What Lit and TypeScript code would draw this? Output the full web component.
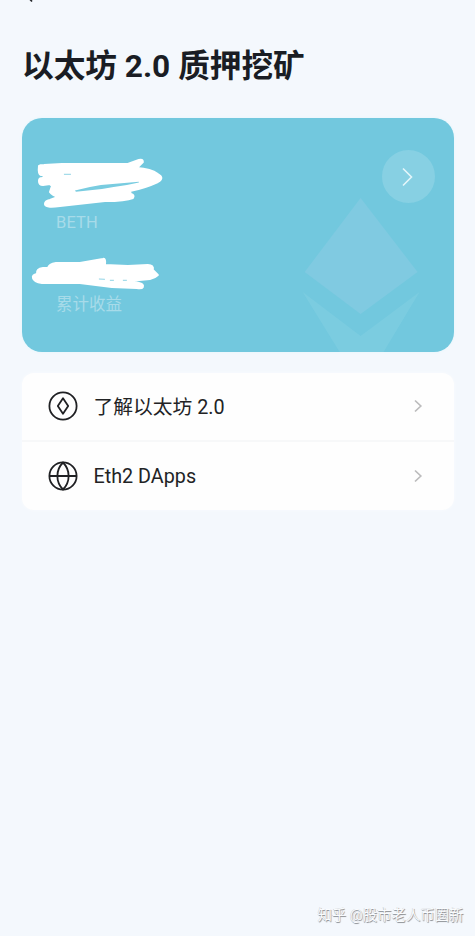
import { LitElement, html, css, svg } from "lit";
import { customElement, property } from "lit/decorators.js";

@customElement("staking-card")
class StakingCard extends LitElement {
  static styles = css`
    :host { display: block; }
    .card { position: relative; height: 234px; border-radius: 20px; overflow: hidden; background: #72c8de; display: flex; justify-content: space-between; box-sizing: border-box; padding: 32px 19px 0 34px; box-shadow: 0 0 3px #e2f6fb; }
    .art { position: absolute; inset: 0; width: 100%; height: 100%; }
    .labels { position: relative; display: flex; flex-direction: column; padding-top: 61px; gap: 58px; font-size: 16.5px; line-height: 24px; color: #a7dbe9; }
    .beth { letter-spacing: 0.1px; }
    .go { position: relative; width: 53px; height: 53px; border-radius: 50%; background: #87d0e3; display: flex; align-items: center; justify-content: center; }
  `;
  render() {
    return html`<div class="card">
      <svg class="art" viewBox="22 118 432 234" preserveAspectRatio="none">
        <path fill="#80cae1" d="M361 198L418 272L361 314L305 272Z"/>
        <path fill="#7bcce0" d="M303 292L361 336L420 292L384 352H340Z"/>
        <g fill="#fff" stroke="#fff" stroke-width="2" stroke-linejoin="round" stroke-linecap="round">
          <path d="M39 166Q40 165 44 165L62 164L128 164L139 160Q143 159 143 162L137 168Q151 169 158 174Q165 178 158 182Q145 188 130 191L131 194Q135 195 133 198Q126 201 105 201L60 206Q45 208 45 204Q45 201 50 200L58 197Q52 195 50 192L52 186L50 184L43 185Q39 185 39 181Q39 178 42 178L48 174L41 175Q38 174 39 166Z"/>
          <path d="M33 278Q32 275 37 274Q36 269 43 268L48 268Q49 264 56 263L80 263L103 259Q106 258 105 265L128 266L148 265Q154 265 153 270L158 275Q155 278 150 279L129 281L139 283Q144 284 143 287Q142 289 137 288L112 287L80 283L42 283Q34 282 33 278Z"/>
        </g>
        <path fill="#79cce0" d="M75 190.5Q88 187 101 185L139 181.7V182.6L127 185Q113 187 102 189L76 191.8Z"/>
        <path fill="none" stroke="#72c8de" stroke-width=".8" d="M64 174.3h7M99 279l6 .3m5 1h4m9 0h4"/>
      </svg>
      <div class="labels"><span class="beth">BETH</span><span>累计收益</span></div>
      <div class="go"><svg width="14" height="20" viewBox="0 0 14 20" fill="none" stroke="#e4f6fa" stroke-width="1.6"><path d="M2 1.5L10.5 10L2 18.5"/></svg></div>
    </div>`;
  }
}

@customElement("menu-row")
class MenuRow extends LitElement {
  @property() icon = "";
  @property() label = "";
  static styles = css`
    :host { display: block; }
    .row { height: 100%; display: flex; align-items: center; box-sizing: border-box; padding: 0 31px 1px 26px; }
    .icon { width: 30px; height: 30px; flex: none; }
    .label { flex: 1; margin-left: 15.5px; padding-top: 3px; font-size: 19.75px; line-height: 28px; color: #222325; white-space: nowrap; }
    .arrow { width: 10px; height: 14px; flex: none; }
  `;
  render() {
    const glyph = this.icon === "globe"
      ? svg`<path d="M15 1.5C7.5 9 7.5 21 15 28.5C22.5 21 22.5 9 15 1.5ZM1.5 15H28.5"/>`
      : svg`<path d="M15 7.2L20.2 15L15 22.8L9.8 15Z"/>`;
    return html`<div class="row">
      <svg class="icon" viewBox="0 0 30 30" fill="none" stroke="#202124" stroke-width="1.8" stroke-linejoin="round"><circle cx="15" cy="15" r="13.6"/>${glyph}</svg>
      <span class="label">${this.label}</span>
      <svg class="arrow" viewBox="0 0 10 14" fill="none" stroke="#bcbcbd" stroke-width="1.7"><path d="M2 1.5L7.8 7L2 12.5"/></svg>
    </div>`;
  }
}

@customElement("app-root")
class AppRoot extends LitElement {
  static styles = css`
    :host { display: block; font-family: Roboto, "Noto Sans CJK SC", sans-serif; }
    .page { position: relative; height: 936px; box-sizing: border-box; padding: 0 21.5px 0 22px; background: #f4f8fd; overflow: hidden; display: flex; flex-direction: column; }
    .back { display: block; width: 12px; height: 4px; margin-left: 5px; flex: none; }
    h1 { margin: 41px 0 0; height: 44px; line-height: 44px; font-size: 31.65px; font-weight: 700; color: #1a1d24; white-space: nowrap; }
    staking-card { margin-top: 29px; }
    .list { margin-top: 21px; height: 137px; border-radius: 12px; overflow: hidden; background: #f7f8f9; display: flex; flex-direction: column; gap: 2px; flex: none; box-shadow: 0 0 3px #fafcfe; }
    menu-row { background: #fefefe; height: 67px; flex: none; }
    menu-row + menu-row { height: 68px; }
    .mark { margin: auto -10px 8px 0; align-self: flex-end; font-size: 14.4px; line-height: 24px; color: #fafcfe; text-shadow: 0.7px 0.8px 0.7px #8e9196, -0.3px -0.3px 0.5px #b9bcc1; white-space: nowrap; }
  `;
  render() {
    return html`<div class="page">
      <svg class="back" viewBox="0 0 12 4" fill="none" stroke="#25272b" stroke-width="1.7"><path d="M1 -3L5 1.5"/></svg>
      <h1>以太坊 2.0 质押挖矿</h1>
      <staking-card></staking-card>
      <div class="list">
        <menu-row icon="eth" label="了解以太坊 2.0"></menu-row>
        <menu-row icon="globe" label="Eth2 DApps"></menu-row>
      </div>
      <div class="mark">知乎 @股市老人币圈新</div>
    </div>`;
  }
}
